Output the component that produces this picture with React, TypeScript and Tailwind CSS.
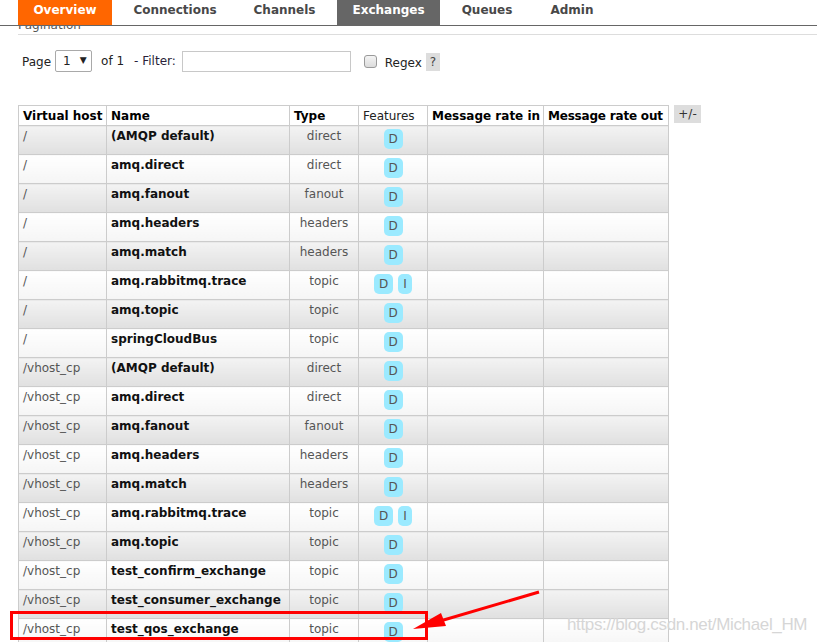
import React from "react";

type Row = { vhost: string; name: string; type: string; features: string[] };

const rows: Row[] = [
  { vhost: "/", name: "(AMQP default)", type: "direct", features: ["D"] },
  { vhost: "/", name: "amq.direct", type: "direct", features: ["D"] },
  { vhost: "/", name: "amq.fanout", type: "fanout", features: ["D"] },
  { vhost: "/", name: "amq.headers", type: "headers", features: ["D"] },
  { vhost: "/", name: "amq.match", type: "headers", features: ["D"] },
  { vhost: "/", name: "amq.rabbitmq.trace", type: "topic", features: ["D", "I"] },
  { vhost: "/", name: "amq.topic", type: "topic", features: ["D"] },
  { vhost: "/", name: "springCloudBus", type: "topic", features: ["D"] },
  { vhost: "/vhost_cp", name: "(AMQP default)", type: "direct", features: ["D"] },
  { vhost: "/vhost_cp", name: "amq.direct", type: "direct", features: ["D"] },
  { vhost: "/vhost_cp", name: "amq.fanout", type: "fanout", features: ["D"] },
  { vhost: "/vhost_cp", name: "amq.headers", type: "headers", features: ["D"] },
  { vhost: "/vhost_cp", name: "amq.match", type: "headers", features: ["D"] },
  { vhost: "/vhost_cp", name: "amq.rabbitmq.trace", type: "topic", features: ["D", "I"] },
  { vhost: "/vhost_cp", name: "amq.topic", type: "topic", features: ["D"] },
  { vhost: "/vhost_cp", name: "test_confirm_exchange", type: "topic", features: ["D"] },
  { vhost: "/vhost_cp", name: "test_consumer_exchange", type: "topic", features: ["D"] },
  { vhost: "/vhost_cp", name: "test_qos_exchange", type: "topic", features: ["D"] },
];

const tabs = [
  { label: "Overview", w: "w-[94px]", cls: "bg-[#ff6600] text-white" },
  { label: "Connections", w: "w-[114px]", cls: "text-[#484848]" },
  { label: "Channels", w: "w-[93px]", cls: "text-[#484848]" },
  { label: "Exchanges", w: "w-[103px]", cls: "bg-[#666666] text-white" },
  { label: "Queues", w: "w-[82px]", cls: "text-[#484848]" },
  { label: "Admin", w: "w-[76px]", cls: "text-[#484848]" },
];

export default function App() {
  return (
    <div className="relative w-[817px] h-[642px] overflow-hidden bg-white font-['DejaVu_Sans',sans-serif] text-[12px] text-[#222]">
      {/* top menu */}
      <div className="flex gap-[6px] pl-[18px] h-[26px] border-b border-[#666]">
        {tabs.map((t) => (
          <div key={t.label} className={`${t.w} ${t.cls} h-[25px] pt-[3px] leading-[14px] text-center font-bold text-[12px]`}>
            {t.label}
          </div>
        ))}
      </div>

      {/* section heading, scrolled under the menu */}
      <div className="ml-[18px] h-[9px] overflow-hidden border-b border-[#ddd]">
        <div className="-mt-[8px] leading-[14px] text-[#555]">Pagination</div>
      </div>

      {/* pagination row */}
      <div className="flex items-center h-[22px] mt-[15px] pl-[22px]">
        <span className="mt-[1px]">Page</span>
        <div className="ml-[4px] w-[37px] h-[22px] border border-[#a9a9a9] rounded-[2px] flex items-center pl-[7px] gap-[9px]">
          <span>1</span>
          <span className="text-[9px]">▼</span>
        </div>
        <span className="ml-[9px]">of 1</span>
        <span className="ml-[10px] text-[#2a1f3a]">- Filter:</span>
        <div className="ml-[6px] w-[169px] h-[21px] border border-[#c8c8c8] bg-white" />
        <div className="ml-[13px] w-[13px] h-[13px] rounded-[3px] border border-[#9a9a9a] bg-gradient-to-b from-[#f4f4f4] to-[#dcdcdc]" />
        <span className="ml-[8px] mt-[3px]">Regex</span>
        <div className="ml-[4px] mt-[2px] w-[14px] h-[18px] bg-[#dddddd] flex items-center justify-center text-[#444]">?</div>
      </div>

      {/* exchanges table */}
      <div className="flex items-start mt-[33px] pl-[18px]">
        <table className="table-fixed border-collapse w-[651px]">
          <colgroup>
            <col className="w-[88px]" />
            <col className="w-[183px]" />
            <col className="w-[69px]" />
            <col className="w-[69px]" />
            <col className="w-[116px]" />
            <col className="w-[125px]" />
          </colgroup>
          <thead>
            <tr className="h-[20px]">
              <th className="border border-[#ccc] px-[4px] py-0 text-left font-bold text-black whitespace-nowrap">Virtual host</th>
              <th className="border border-[#ccc] px-[4px] py-0 text-left font-bold text-black">Name</th>
              <th className="border border-[#ccc] px-[4px] py-0 text-left font-bold text-black">Type</th>
              <th className="border border-[#ccc] px-[4px] py-0 text-left font-normal text-[#222]">Features</th>
              <th className="border border-[#ccc] px-[4px] py-0 text-left font-bold text-black whitespace-nowrap">Message rate in</th>
              <th className="border border-[#ccc] px-[4px] py-0 text-left font-bold text-black whitespace-nowrap tracking-[-0.2px]">Message rate out</th>
            </tr>
          </thead>
          <tbody>
            {rows.map((r, i) => {
              const bg =
                i % 2 === 0
                  ? "bg-gradient-to-b from-[#f3f3f3] to-[#e0e0e0]"
                  : "bg-gradient-to-b from-[#ffffff] to-[#f5f5f5]";
              const td = `${bg} border border-[#ccc] align-top h-[29px] px-[4px] pt-[3px] leading-[14px]`;
              return (
                <tr key={i}>
                  <td className={`${td} text-[#555]`}>{r.vhost}</td>
                  <td className={`${td} font-bold text-[#111] whitespace-nowrap`}>{r.name}</td>
                  <td className={`${td} text-center text-[#555]`}>{r.type}</td>
                  <td className={`${td} text-center`}>
                    <div className="flex justify-center gap-[5px]">
                      {r.features.map((f) => (
                        <span
                          key={f}
                          className={`${f === "D" ? "w-[19px]" : "w-[14px]"} h-[20px] rounded-[5px] bg-[#9beaff] text-[#555] leading-[20px] text-center text-[12px]`}
                        >
                          {f}
                        </span>
                      ))}
                    </div>
                  </td>
                  <td className={td}></td>
                  <td className={td}></td>
                </tr>
              );
            })}
          </tbody>
        </table>
        <div className="ml-[5px] w-[27px] h-[18px] bg-[#dddddd] flex items-center justify-center text-[12px] text-[#333]">+/-</div>
      </div>

      {/* annotation: red highlight box */}
      <div className="absolute left-[10px] top-[611px] w-[418px] h-[29px] border-[3px] border-[#ff0000]" />

      {/* annotation: red arrow */}
      <svg className="absolute left-0 top-0" width="817" height="642" viewBox="0 0 817 642">
        <line x1="539" y1="592" x2="430" y2="624" stroke="#ff0000" strokeWidth="3" />
        <polygon points="413,629 441,613 446,626" fill="#ff0000" />
      </svg>

      {/* watermark */}
      <div className="absolute left-[567px] top-[612px] font-['Liberation_Sans',sans-serif] text-[17px] text-[#d6d6d6] tracking-[-0.35px]">
        https://blog.csdn.net/Michael_HM
      </div>
    </div>
  );
}
